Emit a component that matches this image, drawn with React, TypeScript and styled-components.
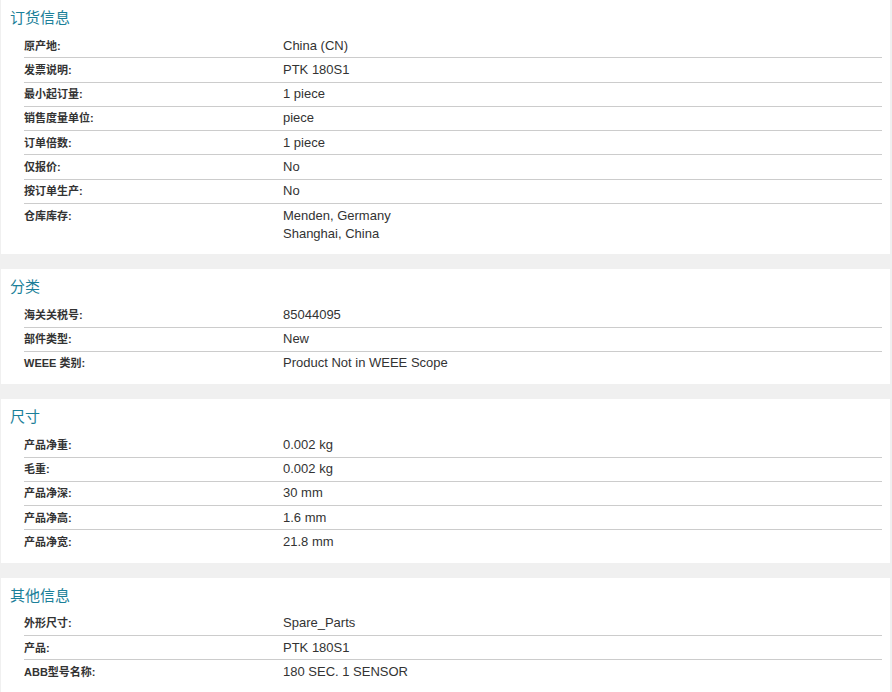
import React from "react";
import styled, { createGlobalStyle } from "styled-components";

const GlobalStyle = createGlobalStyle`
  html, body {
    margin: 0;
    padding: 0;
    background: #f0f0f0;
  }
  body {
    font-family: "Liberation Sans", Arial, "Noto Sans CJK SC", sans-serif;
    color: #333;
  }
`;

const Page = styled.div`
  display: flex;
  flex-direction: column;
  gap: 15px;
  padding: 0 2px 0 1px;
`;

const Card = styled.section`
  background: #fff;
  padding: 0 8px 9px 8px;
`;

const Title = styled.h2`
  margin: 0;
  padding: 8px 0 6px 1px;
  font-family: "Liberation Sans", Arial, "Noto Sans CJK SC", sans-serif;
  font-size: 15px;
  line-height: 20px;
  font-weight: normal;
  color: #1b7f99;
`;

const Table = styled.dl`
  margin: 0 0 0 15px;
  display: flex;
  flex-direction: column;
`;

const Row = styled.div`
  display: grid;
  grid-template-columns: 259px 1fr;
  padding: 2.5px 0 2.8px;
  border-bottom: 1px solid #cccccc;
  &:last-child {
    border-bottom: none;
  }
`;

const Label = styled.dt`
  margin: 0;
  font-size: 11px;
  font-weight: bold;
  line-height: 18px;
  color: #333;
`;

const Value = styled.dd`
  margin: 0;
  font-size: 13px;
  line-height: 18px;
  color: #333;
`;

type Item = { label: string; value: string[] };
type Section = { title: string; items: Item[] };

const sections: Section[] = [
  {
    title: "订货信息",
    items: [
      { label: "原产地:", value: ["China (CN)"] },
      { label: "发票说明:", value: ["PTK 180S1"] },
      { label: "最小起订量:", value: ["1 piece"] },
      { label: "销售度量单位:", value: ["piece"] },
      { label: "订单倍数:", value: ["1 piece"] },
      { label: "仅报价:", value: ["No"] },
      { label: "按订单生产:", value: ["No"] },
      { label: "仓库库存:", value: ["Menden, Germany", "Shanghai, China"] },
    ],
  },
  {
    title: "分类",
    items: [
      { label: "海关关税号:", value: ["85044095"] },
      { label: "部件类型:", value: ["New"] },
      { label: "WEEE 类别:", value: ["Product Not in WEEE Scope"] },
    ],
  },
  {
    title: "尺寸",
    items: [
      { label: "产品净重:", value: ["0.002 kg"] },
      { label: "毛重:", value: ["0.002 kg"] },
      { label: "产品净深:", value: ["30 mm"] },
      { label: "产品净高:", value: ["1.6 mm"] },
      { label: "产品净宽:", value: ["21.8 mm"] },
    ],
  },
  {
    title: "其他信息",
    items: [
      { label: "外形尺寸:", value: ["Spare_Parts"] },
      { label: "产品:", value: ["PTK 180S1"] },
      { label: "ABB型号名称:", value: ["180 SEC. 1 SENSOR"] },
    ],
  },
];

export default function App() {
  return (
    <>
      <GlobalStyle />
      <Page>
        {sections.map((s) => (
          <Card key={s.title}>
            <Title>{s.title}</Title>
            <Table>
              {s.items.map((it) => (
                <Row key={it.label}>
                  <Label>{it.label}</Label>
                  <Value>
                    {it.value.map((v, i) => (
                      <div key={i}>{v}</div>
                    ))}
                  </Value>
                </Row>
              ))}
            </Table>
          </Card>
        ))}
      </Page>
    </>
  );
}
